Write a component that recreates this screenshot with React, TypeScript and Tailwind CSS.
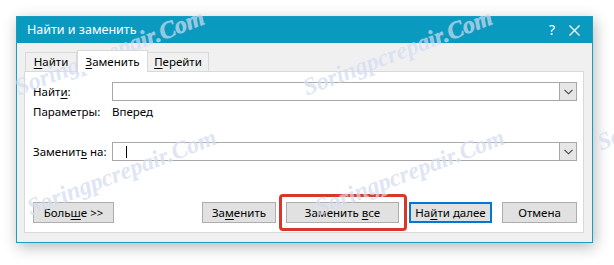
import React from "react";

const U = ({ children }: { children: React.ReactNode }) => (
  <span className="underline underline-offset-2 decoration-1">{children}</span>
);

const Chevron = () => (
  <svg width="9" height="6" viewBox="0 0 9 6" fill="none">
    <path d="M0.5 0.8 L4.5 4.8 L8.5 0.8" stroke="#404040" strokeWidth="1.1" />
  </svg>
);

const Combo = ({ caret }: { caret?: boolean }) => (
  <div className="flex h-[19px] w-[465px] border border-[#a8a8a8] bg-white">
    <div className="relative flex-1">
      {caret && <div className="absolute left-[13px] top-[3px] h-[12px] w-px bg-black" />}
    </div>
    <div className="flex w-[17px] items-center justify-center border-l border-[#a8a8a8] bg-[#e6e6e6]">
      <Chevron />
    </div>
  </div>
);

const Btn = ({
  children,
  w,
  blue,
}: {
  children: React.ReactNode;
  w: string;
  blue?: boolean;
}) => (
  <div
    className={`flex h-[21px] items-center justify-center bg-[#e1e1e1] text-[11.5px] text-black ${w} ${
      blue ? "border-2 border-[#0078d7]" : "border border-[#adadad]"
    }`}
  >
    {children}
  </div>
);

const Watermark = ({ x, y }: { x: number; y: number }) => (
  <div
    className="pointer-events-none absolute whitespace-nowrap text-[24px] font-bold italic text-[#d3dbf0] opacity-70"
    style={{
      left: x,
      top: y,
      transform: "rotate(-21deg)",
      transformOrigin: "left center",
      fontFamily: '"Liberation Serif", serif',
      textShadow: "0 0 1px #fff",
    }}
  >
    Soringpcrepair.Com
  </div>
);

export default function App() {
  return (
    <div
      className="relative h-[265px] w-[614px] overflow-hidden bg-white pl-[16px] pt-[16px]"
      style={{ fontFamily: '"Noto Sans", "Open Sans", sans-serif' }}
    >
      <div className="flex h-[227px] w-[577px] flex-col border border-[#1b9cc3] bg-[#f0f0f0] shadow-[2px_4px_14px_rgba(0,0,0,0.28)]">
        {/* title bar */}
        <div className="flex h-[26px] items-center bg-[#0a9abf] text-white">
          <div className="ml-[10px] text-[12.5px] leading-none">Найти и заменить</div>
          <div className="ml-auto mr-[14px] text-[14px] leading-none">?</div>
          <svg className="mr-[12px]" width="11" height="11" viewBox="0 0 11 11">
            <path d="M0.5 0.5 L10.5 10.5 M10.5 0.5 L0.5 10.5" stroke="white" strokeWidth="1.2" />
          </svg>
        </div>

        {/* tabs */}
        <div className="ml-[7px] mt-[7px] flex h-[21px] items-end pl-[1px]">
          <div className="flex h-[19px] w-[52px] items-center justify-center border border-b-0 border-[#d9d9d9] bg-[#f0f0f0] text-[11.5px]">
            <span>
              <U>Н</U>айти
            </span>
          </div>
          <div className="relative z-10 -mb-px flex h-[22px] w-[71px] items-center justify-center border border-b-0 border-[#d9d9d9] bg-white text-[11.5px]">
            <span>
              <U>З</U>аменить
            </span>
          </div>
          <div className="flex h-[19px] w-[61px] items-center justify-center border border-b-0 border-l-0 border-[#d9d9d9] bg-[#f0f0f0] text-[11.5px]">
            <span>
              <U>П</U>ерейти
            </span>
          </div>
        </div>

        {/* panel */}
        <div className="ml-[7px] flex h-[162px] w-[560px] flex-col border border-[#d9d9d9] bg-white text-[11.5px] text-black">
          <div className="mt-[10px] flex items-center">
            <div className="w-[87px] pl-[8px]">
              Найт<U>и</U>:
            </div>
            <Combo />
          </div>
          <div className="mt-[2px] flex h-[18px] items-center">
            <div className="w-[87px] pl-[8px]">Параметры:</div>
            <div>Вперед</div>
          </div>
          <div className="mt-[21px] flex items-center">
            <div className="w-[87px] pl-[8px]">
              Заменит<U>ь</U> на:
            </div>
            <Combo caret />
          </div>
          <div className="mb-[9px] mt-auto flex items-center pl-[8px]">
            <Btn w="w-[81px]">
              <span>
                Боль<U>ш</U>е &gt;&gt;
              </span>
            </Btn>
            <div className="ml-[88px]">
              <Btn w="w-[74px]">
                <span>
                  За<U>м</U>енить
                </span>
              </Btn>
            </div>
            <div className="relative ml-[10px]">
              <Btn w="w-[113px]">
                <span>
                  Заменить <U>в</U>се
                </span>
              </Btn>
              <div className="pointer-events-none absolute -bottom-[8px] -left-[7px] -right-[8px] -top-[8px] rounded-[4px] border-[3px] border-[#d8372b]" />
            </div>
            <div className="ml-[10px]">
              <Btn w="w-[83px]" blue>
                <span>
                  На<U>й</U>ти далее
                </span>
              </Btn>
            </div>
            <div className="ml-[10px]">
              <Btn w="w-[75px]">
                <span>Отмена</span>
              </Btn>
            </div>
          </div>
        </div>
      </div>

      <Watermark x={16} y={70} />
      <Watermark x={304} y={70} />
      <Watermark x={28} y={190} />
      <Watermark x={316} y={190} />
      <Watermark x={598} y={125} />
    </div>
  );
}
